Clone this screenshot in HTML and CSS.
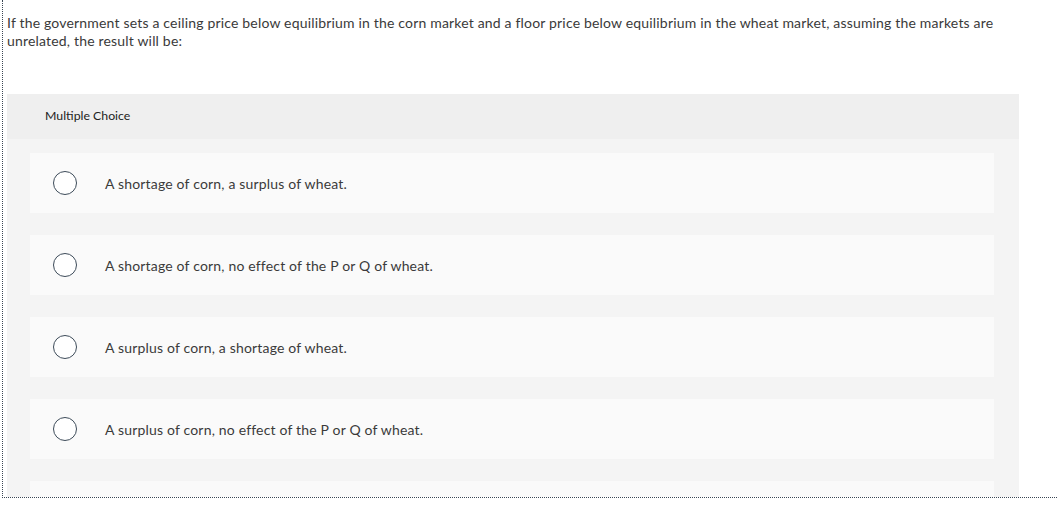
FILE: index.html
```html
<!DOCTYPE html>
<html>
<head>
<meta charset="utf-8">
<link rel="stylesheet" href="styles.css">
</head>
<body>
<div class="frame">
  <p class="question">If the government sets a ceiling price below equilibrium in the corn market and a floor price below equilibrium in the wheat market, assuming the markets are unrelated, the result will be:</p>
  <div class="panel">
    <div class="panel-head">Multiple Choice</div>
    <div class="panel-body">
      <div class="choice"><span class="radio"></span><span class="label">A shortage of corn, a surplus of wheat.</span></div>
      <div class="choice"><span class="radio"></span><span class="label">A shortage of corn, no effect of the P or Q of wheat.</span></div>
      <div class="choice"><span class="radio"></span><span class="label">A surplus of corn, a shortage of wheat.</span></div>
      <div class="choice"><span class="radio"></span><span class="label">A surplus of corn, no effect of the P or Q of wheat.</span></div>
      <div class="choice"><span class="radio"></span><span class="label">A surplus of corn, a surplus of wheat.</span></div>
    </div>
  </div>
</div>
</body>
</html>
```
FILE: styles.css
```css
html, body {
  margin: 0;
  padding: 0;
  background: #ffffff;
}
body {
  font-family: "Lato", "Liberation Sans", sans-serif;
  color: #3a3a3a;
}
.frame {
  margin-left: 2px;
  height: 497px;
  border-left: 1px dotted #3a4654;
  border-bottom: 1px dotted #3a4654;
  overflow: hidden;
  padding-left: 4px;
}
.question {
  margin: 0;
  padding-top: 14px;
  font-size: 14px;
  line-height: 18px;
  letter-spacing: 0.18px;
  width: 1010px;
}
.panel {
  margin-top: 44px;
  width: 1012px;
  background: #f4f4f4;
}
.panel-head {
  height: 42px;
  padding-bottom: 3px;
  display: flex;
  align-items: center;
  padding-left: 38px;
  background: #efefef;
  font-size: 12.3px;
  color: #222;
}
.panel-body {
  padding: 14px 25px 20px 23px;
  display: flex;
  flex-direction: column;
  gap: 22px;
}
.choice {
  height: 60px;
  background: #fafafa;
  display: flex;
  align-items: center;
  padding-left: 23px;
}
.radio {
  width: 22px;
  height: 22px;
  border: 1.5px solid #3d4b59;
  border-radius: 50%;
  background: #fff;
  flex: none;
}
.label {
  margin-left: 28px;
  font-size: 14px;
  letter-spacing: 0.18px;
  color: #3a3a3a;
}
```
